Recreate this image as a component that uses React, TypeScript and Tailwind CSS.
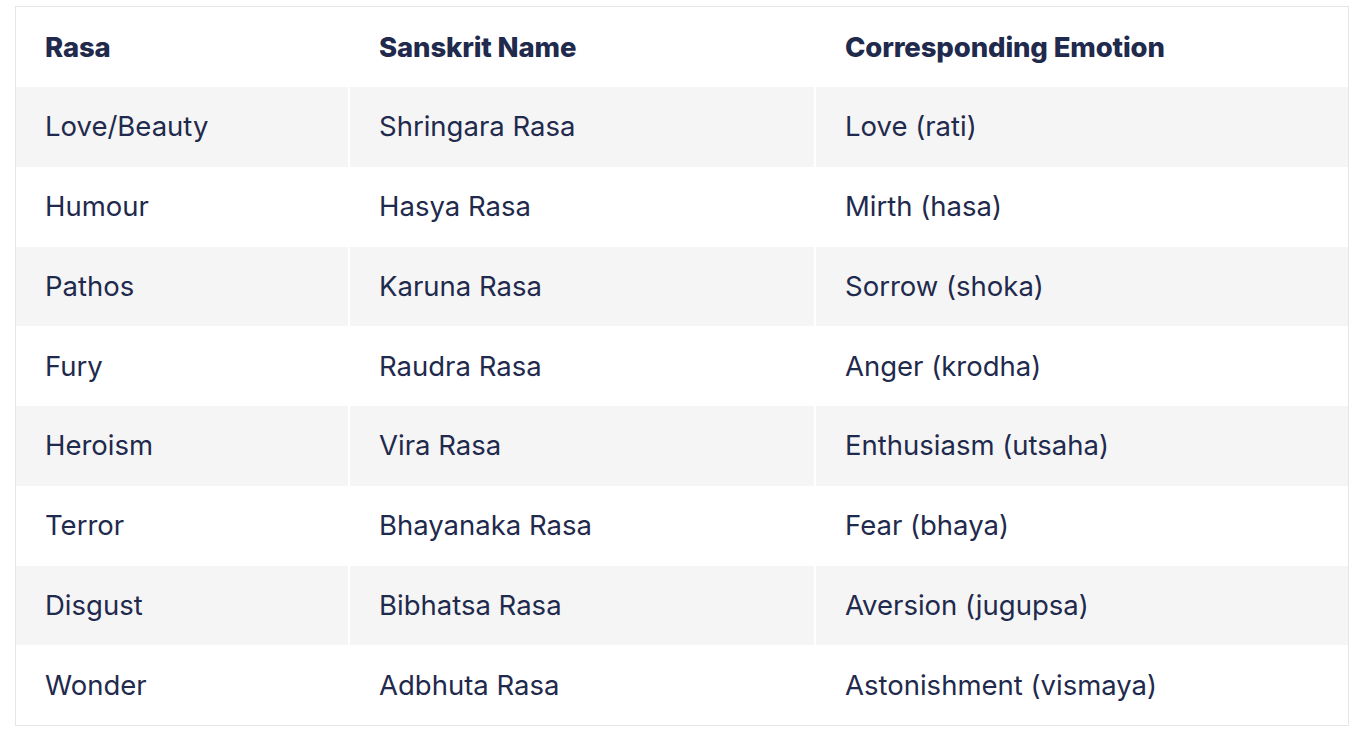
const rows = [
  ["Love/Beauty", "Shringara Rasa", "Love (rati)"],
  ["Humour", "Hasya Rasa", "Mirth (hasa)"],
  ["Pathos", "Karuna Rasa", "Sorrow (shoka)"],
  ["Fury", "Raudra Rasa", "Anger (krodha)"],
  ["Heroism", "Vira Rasa", "Enthusiasm (utsaha)"],
  ["Terror", "Bhayanaka Rasa", "Fear (bhaya)"],
  ["Disgust", "Bibhatsa Rasa", "Aversion (jugupsa)"],
  ["Wonder", "Adbhuta Rasa", "Astonishment (vismaya)"],
];

export default function App() {
  return (
    <div className="w-[1364px] h-[734px] bg-white pt-[6px] pl-[15px] font-['Inter',sans-serif] text-[#1f2a4d]">
      <div className="w-[1334px] border border-[#e6e6e6] bg-white">
        <div className="grid grid-cols-[332px_464px_1fr] gap-x-[2px] h-[80px] pt-[2px] items-center text-[27.5px] font-extrabold tracking-[-0.005em]">
          <div className="pl-[29px]">Rasa</div>
          <div className="pl-[29px]">Sanskrit Name</div>
          <div className="pl-[29px]">Corresponding Emotion</div>
        </div>
        {rows.map((r, i) => (
          <div
            key={r[0]}
            className="grid grid-cols-[332px_464px_1fr] gap-x-[2px] h-[79.75px] text-[27.5px]"
          >
            {r.map((c) => (
              <div
                key={c}
                className={`flex items-center pl-[29px] ${i % 2 === 0 ? "bg-[#f5f5f5]" : "bg-white"}`}
              >
                {c}
              </div>
            ))}
          </div>
        ))}
      </div>
    </div>
  );
}
